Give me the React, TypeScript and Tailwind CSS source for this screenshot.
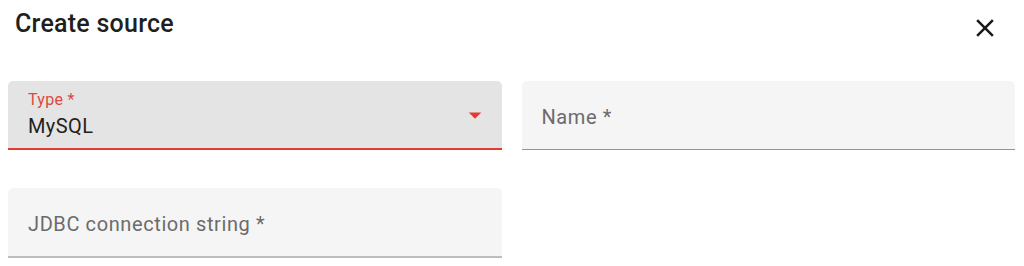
import React from "react";

function CloseIcon() {
  return (
    <svg width="30" height="30" viewBox="0 0 24 24" fill="#1a1a1a">
      <path d="M19 6.41 17.59 5 12 10.59 6.41 5 5 6.41 10.59 12 5 17.59 6.41 19 12 13.41 17.59 19 19 17.59 13.41 12z" />
    </svg>
  );
}

function ArrowDropDown() {
  return (
    <svg width="30" height="30" viewBox="0 0 24 24" fill="#e23b32">
      <path d="M7 10l5 5 5-5z" />
    </svg>
  );
}

export default function App() {
  return (
    <div
      className="w-[1024px] h-[266px] bg-white overflow-hidden"
      style={{ fontFamily: "Roboto, 'Liberation Sans', sans-serif" }}
    >
      <div className="flex items-start justify-between pl-[15px] pr-[24px] h-[43px]">
        <h2 className="pt-[9px] text-[25px] leading-[30px] font-medium text-[#1f1f1f] tracking-[0.25px]">
          Create source
        </h2>
        <button className="mt-[13px] flex items-center justify-center">
          <CloseIcon />
        </button>
      </div>

      <div className="mt-[38px] pl-[8px] pr-[9px] grid grid-cols-2 gap-x-[20px] gap-y-[38px]">
        <div className="relative h-[69px] bg-[#e4e4e4] rounded-t-[5px] border-b-2 border-[#e23b32] pl-[20px] pr-[12px]">
          <div className="pt-[11px] text-[16px] leading-[16px] text-[#dc4a42] tracking-[0.3px]">
            Type *
          </div>
          <div className="mt-[8px] text-[20px] leading-[20px] text-[#1f1f1f] tracking-[0.4px]">
            MySQL
          </div>
          <div className="absolute right-[12px] top-[19px]">
            <ArrowDropDown />
          </div>
        </div>

        <div className="h-[69px] bg-[#f5f5f5] rounded-t-[5px] border-b border-[#949494] pl-[20px] pt-[3px] flex items-center">
          <span className="text-[20px] leading-[20px] text-[#6b6b6b] tracking-[0.6px]">
            Name *
          </span>
        </div>

        <div className="h-[70px] bg-[#f5f5f5] rounded-t-[5px] border-b-2 border-[#bdbdbd] pl-[20px] pt-[3px] flex items-center">
          <span className="text-[20px] leading-[20px] text-[#6b6b6b] tracking-[0.6px]">
            JDBC connection string *
          </span>
        </div>
        <div />
      </div>
    </div>
  );
}
